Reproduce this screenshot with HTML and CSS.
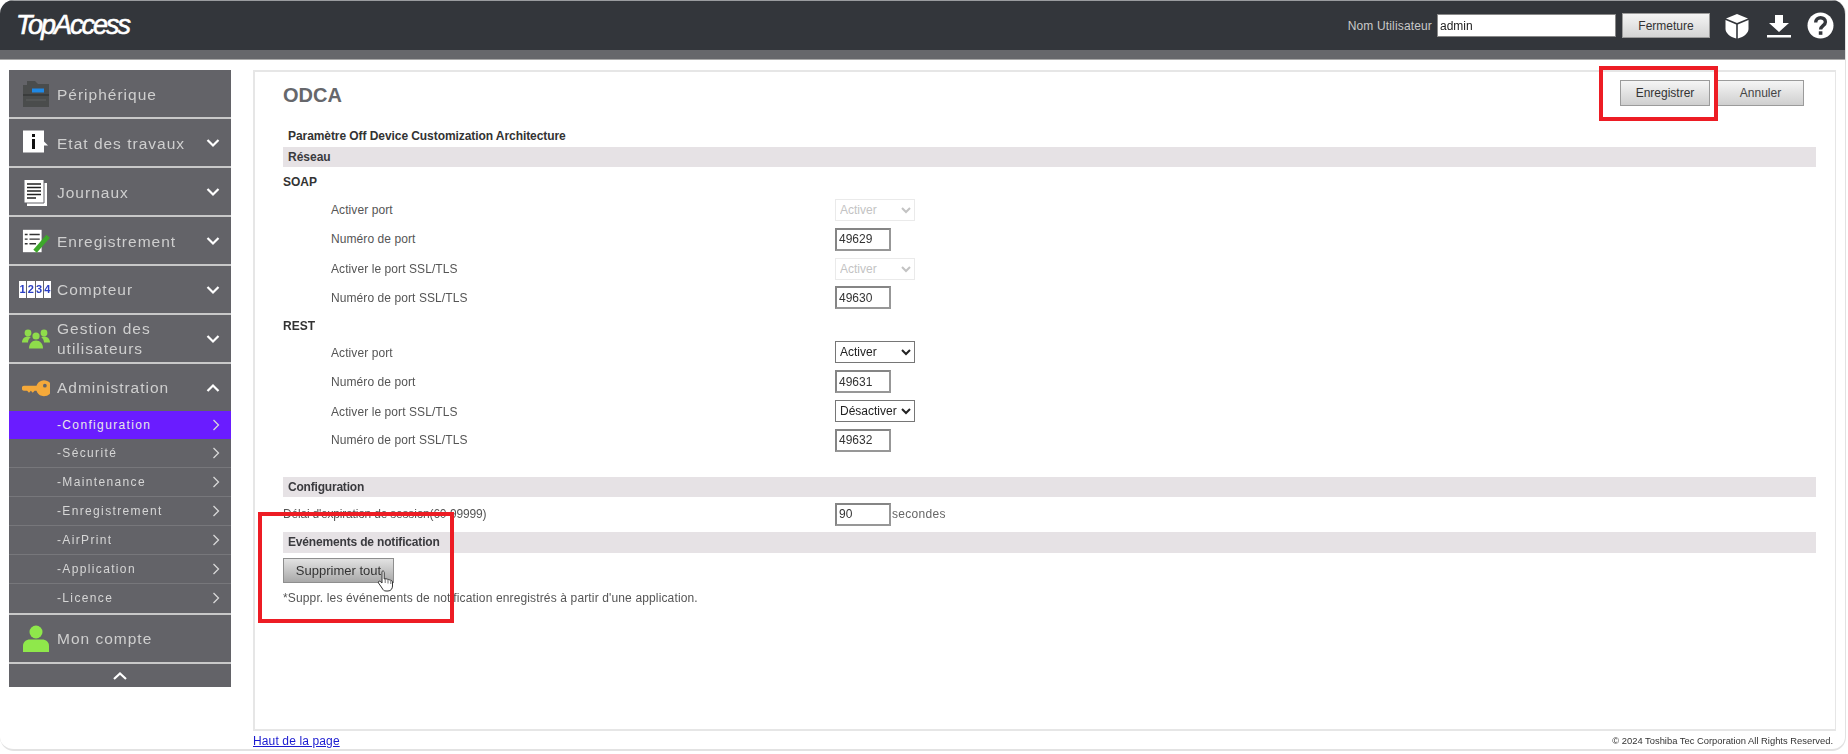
FILE: index.html
```html
<!DOCTYPE html>
<html lang="fr">
<head>
<meta charset="utf-8">
<title>TopAccess</title>
<link rel="stylesheet" href="styles.css">
</head>
<body>
<div class="page">
  <header class="top">
    <div class="logo">TopAccess</div>
    <div class="user">
      <label class="user-label">Nom Utilisateur</label>
      <input class="user-input" type="text" value="admin">
      <button class="btn btn-logout">Fermeture</button>
      <svg class="top-icon cube" viewBox="0 0 26 26"><path fill="#fff" d="M13 1l11 4.500-11 4.500L2 5.500z"/><path fill="#fff" d="M1.500 7l10.700 4.400V25.500C6 24 1.500 20 1.500 16zM24.500 7l-10.700 4.400V25.500C20 24 24.500 20 24.500 16z"/></svg>
      <svg class="top-icon down" viewBox="0 0 24 24"><path fill="#fff" d="M8 1h8v8h6L12 18 2 9h6zM0 21h24v2.500H0z"/></svg>
      <svg class="top-icon help" viewBox="0 0 27 27"><circle cx="13.500" cy="13.500" r="13" fill="#fff"/><path fill="none" stroke="#33363b" stroke-width="3.400" d="M8.700 10.500c0-3 2.200-4.800 4.900-4.800s4.800 1.700 4.800 4.200c0 3.700-4.800 3.800-4.800 7.700"/><rect x="11.800" y="19.300" width="3.600" height="3.500" fill="#33363b"/></svg>
    </div>
  </header>
  <div class="band"></div>

  <div class="body">
    <nav class="side">
      <a class="item item-first">
        <svg class="ico" viewBox="0 0 28 28"><path fill="#4a4c4c" d="M1 5h4V1h8l3 3h11v23H1z"/><path fill="#3a3c3c" d="M1 14h26v2H1z"/><rect x="10" y="8.500" width="12" height="4" fill="#1e88e5"/><path stroke="#5f6161" d="M4 20h20"/></svg>
        <span class="label">Périphérique</span>
      </a>
      <a class="item">
        <svg class="ico" viewBox="0 0 28 28"><path fill="#fff" d="M1 1.500h21v11l4 4h-4v7H1z"/><rect x="10" y="5" width="3" height="3" fill="#111"/><rect x="10" y="10" width="3" height="10" fill="#111"/></svg>
        <span class="label label-low">Etat des travaux</span>
        <svg class="chev" viewBox="0 0 14 10"><path d="M1.500 2l5.500 5.500L12.500 2"/></svg>
      </a>
      <a class="item">
        <svg class="ico" viewBox="0 0 28 28"><path fill="#fff" d="M5 5h20v23H5z"/><path fill="#fff" stroke="#636368" d="M2 1.500h20v23.500H2z"/><path stroke="#222" stroke-width="1.400" d="M5 6h14M5 9.500h14M5 13h14M5 16.500h14M5 20h9"/></svg>
        <span class="label label-low">Journaux</span>
        <svg class="chev" viewBox="0 0 14 10"><path d="M1.500 2l5.500 5.500L12.500 2"/></svg>
      </a>
      <a class="item">
        <svg class="ico" viewBox="0 0 30 28"><path fill="#fff" d="M1 2h20v24H1z"/><path stroke="#333" stroke-width="1.500" d="M3 7h3M8 7h11M3 12h3M8 12h11M3 17h3M8 17h7"/><path stroke="#3da82a" stroke-width="5" d="M14 25L28 9"/></svg>
        <span class="label label-low">Enregistrement</span>
        <svg class="chev" viewBox="0 0 14 10"><path d="M1.500 2l5.500 5.500L12.500 2"/></svg>
      </a>
      <a class="item">
        <span class="digits"><b>1</b><b>2</b><b>3</b><b>4</b></span>
        <span class="label">Compteur</span>
        <svg class="chev" viewBox="0 0 14 10"><path d="M1.500 2l5.500 5.500L12.500 2"/></svg>
      </a>
      <a class="item">
        <svg class="ico" viewBox="1 4 28 22"><g fill="#8fdc4b"><circle cx="7" cy="9" r="3.400"/><circle cx="23" cy="9" r="3.400"/><circle cx="15" cy="12" r="3.600"/><path d="M1 18.500c0-4 3-6 6-6 1 0 2 .2 2.800.6C8 14.500 7 16.500 7 18.500zM29 18.500c0-4-3-6-6-6-1 0-2 .2-2.800.6 1.800 1.400 2.800 3.400 2.800 5.400z"/><path d="M8 24.500c0-5 3-8 7-8s7 3 7 8z"/></g></svg>
        <span class="label">Gestion des utilisateurs</span>
        <svg class="chev" viewBox="0 0 14 10"><path d="M1.500 2l5.500 5.500L12.500 2"/></svg>
      </a>
      <a class="item item-open">
        <svg class="ico" viewBox="0 0 30 28"><path fill="#f5a93a" d="M2.500 11.500h13a8.500 8.500 0 1 1 0 5.500h-2l-2 2-2-2-2 2-2-2h-3a2.750 2.750 0 0 1 0-5.500z"/><circle cx="24.500" cy="11.500" r="2" fill="#636368"/></svg>
        <span class="label">Administration</span>
        <svg class="chev" viewBox="0 0 14 10"><path d="M1.500 8L7 2.500 12.500 8"/></svg>
      </a>
      <a class="sub sub-active"><span class="sub-label">-Configuration</span><svg class="arrow" viewBox="0 0 8 12"><path d="M1.500 1l5 5-5 5"/></svg></a>
      <a class="sub"><span class="sub-label">-Sécurité</span><svg class="arrow" viewBox="0 0 8 12"><path d="M1.500 1l5 5-5 5"/></svg></a>
      <a class="sub"><span class="sub-label">-Maintenance</span><svg class="arrow" viewBox="0 0 8 12"><path d="M1.500 1l5 5-5 5"/></svg></a>
      <a class="sub"><span class="sub-label">-Enregistrement</span><svg class="arrow" viewBox="0 0 8 12"><path d="M1.500 1l5 5-5 5"/></svg></a>
      <a class="sub"><span class="sub-label">-AirPrint</span><svg class="arrow" viewBox="0 0 8 12"><path d="M1.500 1l5 5-5 5"/></svg></a>
      <a class="sub"><span class="sub-label">-Application</span><svg class="arrow" viewBox="0 0 8 12"><path d="M1.500 1l5 5-5 5"/></svg></a>
      <a class="sub sub-last"><span class="sub-label">-Licence</span><svg class="arrow" viewBox="0 0 8 12"><path d="M1.500 1l5 5-5 5"/></svg></a>
      <a class="item">
        <svg class="ico" viewBox="0 0 28 28"><g fill="#8fe84b"><circle cx="14" cy="7" r="6.500"/><path d="M1 27v-6c0-4 3-6.500 7-6.500h12c4 0 7 2.500 7 6.500v6z"/></g></svg>
        <span class="label">Mon compte</span>
      </a>
      <a class="collapse"><svg class="chev-up" viewBox="0 0 14 10"><path d="M1 8l6-5.500L13 8"/></svg></a>
    </nav>

    <div class="main-col">
      <main class="panel">
        <div class="head">
          <h1 class="title">ODCA</h1>
          <div class="head-actions">
            <button class="btn btn-save">Enregistrer</button>
            <button class="btn btn-cancel">Annuler</button>
          </div>
        </div>
        <div class="intro">Paramètre Off Device Customization Architecture</div>
        <div class="bar">Réseau</div>
        <div class="group group-soap">SOAP</div>
        <div class="row"><span class="row-label">Activer port</span><select class="sel sel-off" disabled><option>Activer</option></select></div>
        <div class="row"><span class="row-label">Numéro de port</span><input class="num" type="text" value="49629"></div>
        <div class="row"><span class="row-label">Activer le port SSL/TLS</span><select class="sel sel-off" disabled><option>Activer</option></select></div>
        <div class="row"><span class="row-label">Numéro de port SSL/TLS</span><input class="num" type="text" value="49630"></div>
        <div class="group group-rest">REST</div>
        <div class="row"><span class="row-label row-label-low">Activer port</span><select class="sel"><option>Activer</option></select></div>
        <div class="row"><span class="row-label">Numéro de port</span><input class="num" type="text" value="49631"></div>
        <div class="row"><span class="row-label row-label-low">Activer le port SSL/TLS</span><select class="sel"><option>Désactiver</option></select></div>
        <div class="row"><span class="row-label">Numéro de port SSL/TLS</span><input class="num" type="text" value="49632"></div>
        <div class="bar bar-config">Configuration</div>
        <div class="row row-session"><span class="row-label row-label-flush">Délai d'expiration de session(60-99999)</span><input class="num" type="text" value="90"><span class="unit">secondes</span></div>
        <div class="bar bar-events">Evénements de notification</div>
        <button class="btn btn-delete">Supprimer tout</button>
        <p class="note">*Suppr. les événements de notification enregistrés à partir d'une application.</p>
      </main>
      <footer class="foot">
        <a class="toplink" href="#">Haut de la page</a>
        <span class="copy">© 2024 Toshiba Tec Corporation All Rights Reserved.</span>
      </footer>
    </div>
  </div>

  <div class="mark mark-save"></div>
  <div class="mark mark-delete"></div>
  <svg class="cursor" viewBox="0 0 18 22"><path fill="#fff" stroke="#333" stroke-width="1" d="M5 1.500c1-1 2.200-.5 2.200 1V9l1-.3c.8-.2 1.500 0 1.800.7.8-.4 1.600-.2 2 .6.800-.4 1.700-.1 2 .7.800-.2 1.500.3 1.500 1.300v4c0 2.500-1.500 5-4.500 5H9c-2 0-3-1-4-3L1.500 13c-.7-1.200.6-2.400 1.700-1.600L5 13z"/><path stroke="#333" stroke-width=".7" d="M8.200 9v4M11 10v3.500M13.800 11v3"/></svg>
</div>
</body>
</html>
```
FILE: styles.css
```css
* { box-sizing: border-box; }
html, body { margin: 0; height: 100%; background: #fff; overflow: hidden; }
body { font-family: "Liberation Sans", Arial, sans-serif; font-size: 12px; color: #333; }

.page {
  position: relative;
  width: 1846px;
  height: 751px;
  border-right: 1px solid #e2e2e2;
  border-bottom: 2px solid #e2e2e2;
  border-radius: 14px;
  overflow: hidden;
  filter: blur(.35px);
}

/* Header */
.top {
  height: 50px;
  background: #33363b;
  display: flex;
  align-items: center;
  justify-content: space-between;
  padding: 0 11px 0 16px;
  border-top: 1px solid #9a9c9f;
}
.logo {
  color: #fff;
  font-size: 27px;
  font-style: italic;
  letter-spacing: -2px;
  -webkit-text-stroke: .6px #fff;
}
.user { display: flex; align-items: center; }
.user-label { color: #c9c9c9; font-size: 12px; letter-spacing: .15px; margin-right: 5px; }
.user-input {
  width: 179px;
  height: 23px;
  border: 1px solid #888;
  padding: 0 2px;
  font: 12px "Liberation Sans", Arial, sans-serif;
  color: #222;
  outline: 0;
}
.btn {
  font-family: "Liberation Sans", Arial, sans-serif;
  font-size: 12px;
  color: #333;
  border: 1px solid #9b9b9b;
  background: linear-gradient(#f5f5f5, #cfcfcf);
  padding: 0;
}
.btn-logout { width: 88px; height: 25px; margin-left: 6px; background: linear-gradient(#f4f4f4, #d4d4d4); }
.top-icon { display: block; }
.cube { width: 26px; height: 26px; margin-left: 14px; }
.down { width: 24px; height: 24px; margin-left: 17px; }
.help { width: 27px; height: 27px; margin-left: 16px; }
.band { height: 10px; background: #66676b; border-bottom: 1px solid #a8a8a8; }

/* Body */
.body { display: flex; align-items: flex-start; padding: 10px 10px 0 9px; }

/* Sidebar */
.side { width: 222px; flex: none; margin-right: 22px; background: #636368; display: flex; flex-direction: column; }
.item {
  height: 49px;
  display: flex;
  align-items: center;
  color: #cfcfcf;
  font-size: 15.5px;
  letter-spacing: 1px;
  line-height: 20px;
  padding-left: 13px;
  border-bottom: 2px solid #c9c9c9;
  position: relative;
}
.item-first .label { padding-top: 3px; }
.label-low { padding-top: 2px; }
.item-open { border-bottom: 0; height: 47px; }
.ico { width: 28px; height: 28px; flex: none; display: block; margin-right: 7px; }
.label { width: 130px; color: #cfcfcf; }
.chev { position: absolute; right: 11px; top: 19px; width: 14px; height: 10px; fill: none; stroke: #fff; stroke-width: 2.200; }
.digits { display: flex; width: 32px; height: 17px; margin: 0 6px 0 -3px; flex: none; gap: 1px; background: #636368; }
.digits b {
  flex: 1;
  background: #fff;
  color: #2b3fc5;
  font-size: 11px;
  font-weight: 700;
  letter-spacing: 0;
  line-height: 17px;
  text-align: center;
}
.sub {
  height: 29px;
  display: flex;
  align-items: center;
  padding-left: 48px;
  color: #d6d6d6;
  font-size: 12px;
  letter-spacing: 1.35px;
  border-bottom: 1px solid #77777b;
  position: relative;
}
.sub-active { background: #6a1cff; color: #e8e8e8; border-bottom: 0; height: 28px; }
.sub-last { border-bottom: 2px solid #c9c9c9; height: 31px; padding-bottom: 2px; }
.arrow { position: absolute; right: 11px; top: 8px; width: 8px; height: 12px; fill: none; stroke: #d8d8d8; stroke-width: 1.300; }
.collapse { height: 23px; display: flex; justify-content: center; align-items: center; }
.chev-up { width: 14px; height: 10px; fill: none; stroke: #fff; stroke-width: 2.200; }

/* Main */
.main-col { flex: 1; min-width: 0; padding-right: 0; }
.panel {
  height: 661px;
  width: 1583px;
  border: 2px solid #e6e6e6;
  border-right-width: 1px;
  padding: 0 19px 0 28px;
  background: #fff;
}
.head { height: 54px; display: flex; justify-content: space-between; padding-right: 12px; }
.title { margin: 11px 0 0; font-size: 20px; line-height: 24px; font-weight: 700; color: #66676b; }
.head-actions { display: flex; margin-top: 8px; align-items: flex-start; }
.btn-save { width: 90px; height: 26px; }
.btn-cancel { width: 87px; height: 26px; margin-left: 7px; color: #444; }
.intro { height: 21px; line-height: 21px; padding-left: 5px; font-weight: 700; color: #333; letter-spacing: -.07px; }
.bar { height: 20px; line-height: 20px; background: #e6e2e5; padding-left: 5px; font-weight: 700; color: #3a3a3e; }
.group { font-weight: 700; color: #333; }
.group-soap { height: 28.300px; line-height: 31px; }
.group-rest { height: 25px; line-height: 26px; }
.row { height: 29.330px; display: flex; align-items: center; }
.row-label { width: 552px; padding-left: 48px; color: #555; flex: none; letter-spacing: .08px; }
.row-label-low { padding-top: 2px; }
.row-label-flush { padding-left: 0; letter-spacing: -.2px; }
.sel {
  width: 80px;
  height: 22px;
  font: 12px "Liberation Sans", Arial, sans-serif;
  color: #222;
  background: #fff;
}
.sel-off { border: 1px solid #e2e2e2; color: #aaa; }
.num {
  width: 56px;
  height: 23px;
  padding: 1px 2px;
  font: 12px "Liberation Sans", Arial, sans-serif;
  color: #333;
  border: 2px solid #979797;
  border-top-color: #858585;
  border-left-color: #858585;
  outline: 0;
}
.unit { margin-left: 1px; color: #666; letter-spacing: .3px; }
.bar-config { margin-top: 21.700px; letter-spacing: -.2px; }
.row-session { height: 35px; }
.bar-events { height: 21px; line-height: 21px; letter-spacing: -.17px; }
.btn-delete {
  display: block;
  width: 111px;
  height: 25px;
  margin-top: 5px;
  background: linear-gradient(#e2e2e2, #a9a9a9);
  font-size: 13px;
  border-color: #8e8e8e;
}
.note { margin: 0; height: 30px; line-height: 30px; color: #555; letter-spacing: .14px; }
.foot { display: flex; justify-content: space-between; align-items: center; height: 19px; }
.toplink { color: #1a1ad0; font-size: 12px; letter-spacing: .13px; }
.copy { font-size: 9.400px; color: #333; padding-right: 2px; }

/* Overlays */
.mark { position: absolute; border: 4px solid #ed1c24; }
.mark-save { left: 1599px; top: 66px; width: 119px; height: 55px; }
.mark-delete { left: 258px; top: 512px; width: 196px; height: 111px; }
.cursor { position: absolute; left: 377px; top: 570px; width: 18px; height: 22px; }
```
